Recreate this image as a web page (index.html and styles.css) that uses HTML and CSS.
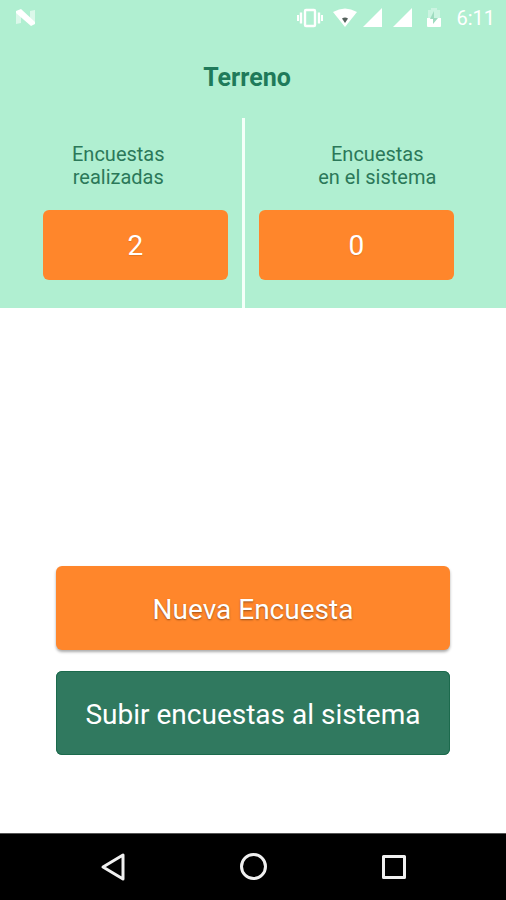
FILE: index.html
```html
<!DOCTYPE html>
<html lang="es">
<head>
<meta charset="utf-8">
<meta name="viewport" content="width=device-width, initial-scale=1">
<title>Terreno</title>
<link rel="stylesheet" href="styles.css">
</head>
<body>
<header class="summary">
  <div class="status-bar">
    <svg class="logo" width="22" height="20" viewBox="0 0 22 20" aria-hidden="true">
      <path d="M1 3v13l5-1V7zM15 3l5-1v13l-5-2z" fill="#fff" opacity=".55"/>
      <path d="M1 3l5-2 14 13v2l-4 2L1 5z" fill="#fff"/>
    </svg>
    <div class="status-icons">
      <svg width="28" height="22" viewBox="0 0 28 22" fill="none" stroke="#fff" aria-hidden="true">
        <rect x="9" y="3" width="10" height="16" rx="1" stroke-width="2.4"/>
        <path d="M5 5.500v11M23 5.500v11" stroke-width="2.400"/>
        <path d="M2 8v6M26 8v6" stroke-width="2"/>
      </svg>
      <svg class="wifi" width="26" height="22" viewBox="0 0 26 22" aria-hidden="true">
        <path d="M1 5Q13-2 25 5L13 20z" fill="#fff"/>
        <path d="M10 11.500q3-2 6 0L13 16z" fill="#56635d"/>
      </svg>
      <svg width="22" height="22" viewBox="0 0 22 22" aria-hidden="true"><path d="M0 20L19 1v19z" fill="#fff"/></svg>
      <svg width="22" height="22" viewBox="0 0 22 22" aria-hidden="true"><path d="M0 20L19 1v19z" fill="#fff"/></svg>
      <svg class="battery" width="14" height="22" viewBox="0 0 14 22" aria-hidden="true">
        <path d="M1 3h3V1h6v2h3v8H1z" fill="#fff" opacity=".35"/>
        <path d="M0 11h14v8q0 1-1 1H1q-1 0-1-1z" fill="#fff"/>
        <path d="M7 4l-4 8h3v5l5-6H7z" fill="#9fdcc0"/>
      </svg>
      <time class="clock">6:11</time>
    </div>
  </div>
  <h1 class="title">Terreno</h1>
  <div class="counts">
    <section class="count count-done">
      <label class="count-label" for="done">Encuestas<br>realizadas</label>
      <output class="count-value" id="done">2</output>
    </section>
    <section class="count count-system">
      <label class="count-label" for="system">Encuestas<br>en el sistema</label>
      <output class="count-value" id="system">0</output>
    </section>
  </div>
</header>
<main class="actions">
  <button class="action action-new" type="button">Nueva Encuesta</button>
  <button class="action action-upload" type="button">Subir encuestas al sistema</button>
</main>
<nav class="nav-bar">
  <button class="nav-button" type="button" aria-label="Atrás">
    <svg width="32" height="32" viewBox="0 0 32 32" fill="none" stroke="#f0f0f0" stroke-width="3" stroke-linejoin="round"><path d="M6 16L26 4v24z"/></svg>
  </button>
  <button class="nav-button" type="button" aria-label="Inicio">
    <svg width="32" height="32" viewBox="0 0 32 32" fill="none" stroke="#f0f0f0" stroke-width="3"><circle cx="16.500" cy="15.500" r="12"/></svg>
  </button>
  <button class="nav-button" type="button" aria-label="Recientes">
    <svg width="32" height="32" viewBox="0 0 32 32" fill="none" stroke="#f0f0f0" stroke-width="3" stroke-linejoin="round"><path d="M6.500 5.500h21v21h-21z"/></svg>
  </button>
</nav>
</body>
</html>
```
FILE: styles.css
```css
* { box-sizing: border-box; }

body {
  margin: 0;
  min-height: 100vh;
  display: flex;
  flex-direction: column;
  background: #fff;
  font-family: Roboto, "Liberation Sans", sans-serif;
}

svg { display: block; }

.summary { background: #b0efd1; color: #2b7859; }

.status-bar {
  display: flex;
  align-items: center;
  justify-content: space-between;
  height: 36px;
  padding: 0 11px 0 15px;
  color: #fff;
}

.status-icons { display: flex; align-items: center; gap: 8px; }
.wifi { margin-right: -3px; }
.battery { margin: 0 7px 0 4px; }
.clock { font-size: 20px; line-height: 24px; }

.title {
  margin: 24px 0 22px;
  padding-right: 12px;
  font-size: 25px;
  line-height: 36px;
  font-weight: 700;
  text-align: center;
  color: #1f7a5a;
}

.counts { display: grid; grid-template-columns: 29fr 31fr; }

.count {
  display: flex;
  flex-direction: column;
  gap: 21px;
  padding: 25px 14px 28px;
}

.count-done { padding-left: 43px; border-right: 3px solid #f4fff9; }
.count-system { padding-right: 52px; }

.count-label {
  font-size: 20px;
  line-height: 23px;
  text-align: center;
}

.count-done .count-label { margin-right: 34px; }
.count-system .count-label { margin-right: -42px; }

.count-value {
  display: block;
  padding-top: 2px;
  border-radius: 6px;
  background: #ff862b;
  color: #fff;
  font-size: 28px;
  line-height: 68px;
  text-align: center;
  text-shadow: 0 1px 1px #b8601a66;
}

.actions {
  flex: 1;
  display: flex;
  flex-direction: column;
  justify-content: flex-end;
  gap: 21px;
  padding: 78px 56px;
}

.action {
  height: 84px;
  padding: 3px 0 0;
  border: 0;
  border-radius: 6px;
  color: #fff;
  font: 400 28px/34px Roboto, "Liberation Sans", sans-serif;
}

.action-new {
  background: #ff862b;
  box-shadow: 0 2px 3px #00000055;
  text-shadow: 0 1px 2px #00000066;
}

.action-upload { background: #30795f; box-shadow: inset 0 0 0 1px #1c6a4d; }

.nav-bar {
  display: flex;
  justify-content: center;
  align-items: center;
  gap: 108px;
  height: 67px;
  background: #000;
  border-top: 1px solid #555;
}

.nav-button { padding: 0; border: 0; background: none; }
```
